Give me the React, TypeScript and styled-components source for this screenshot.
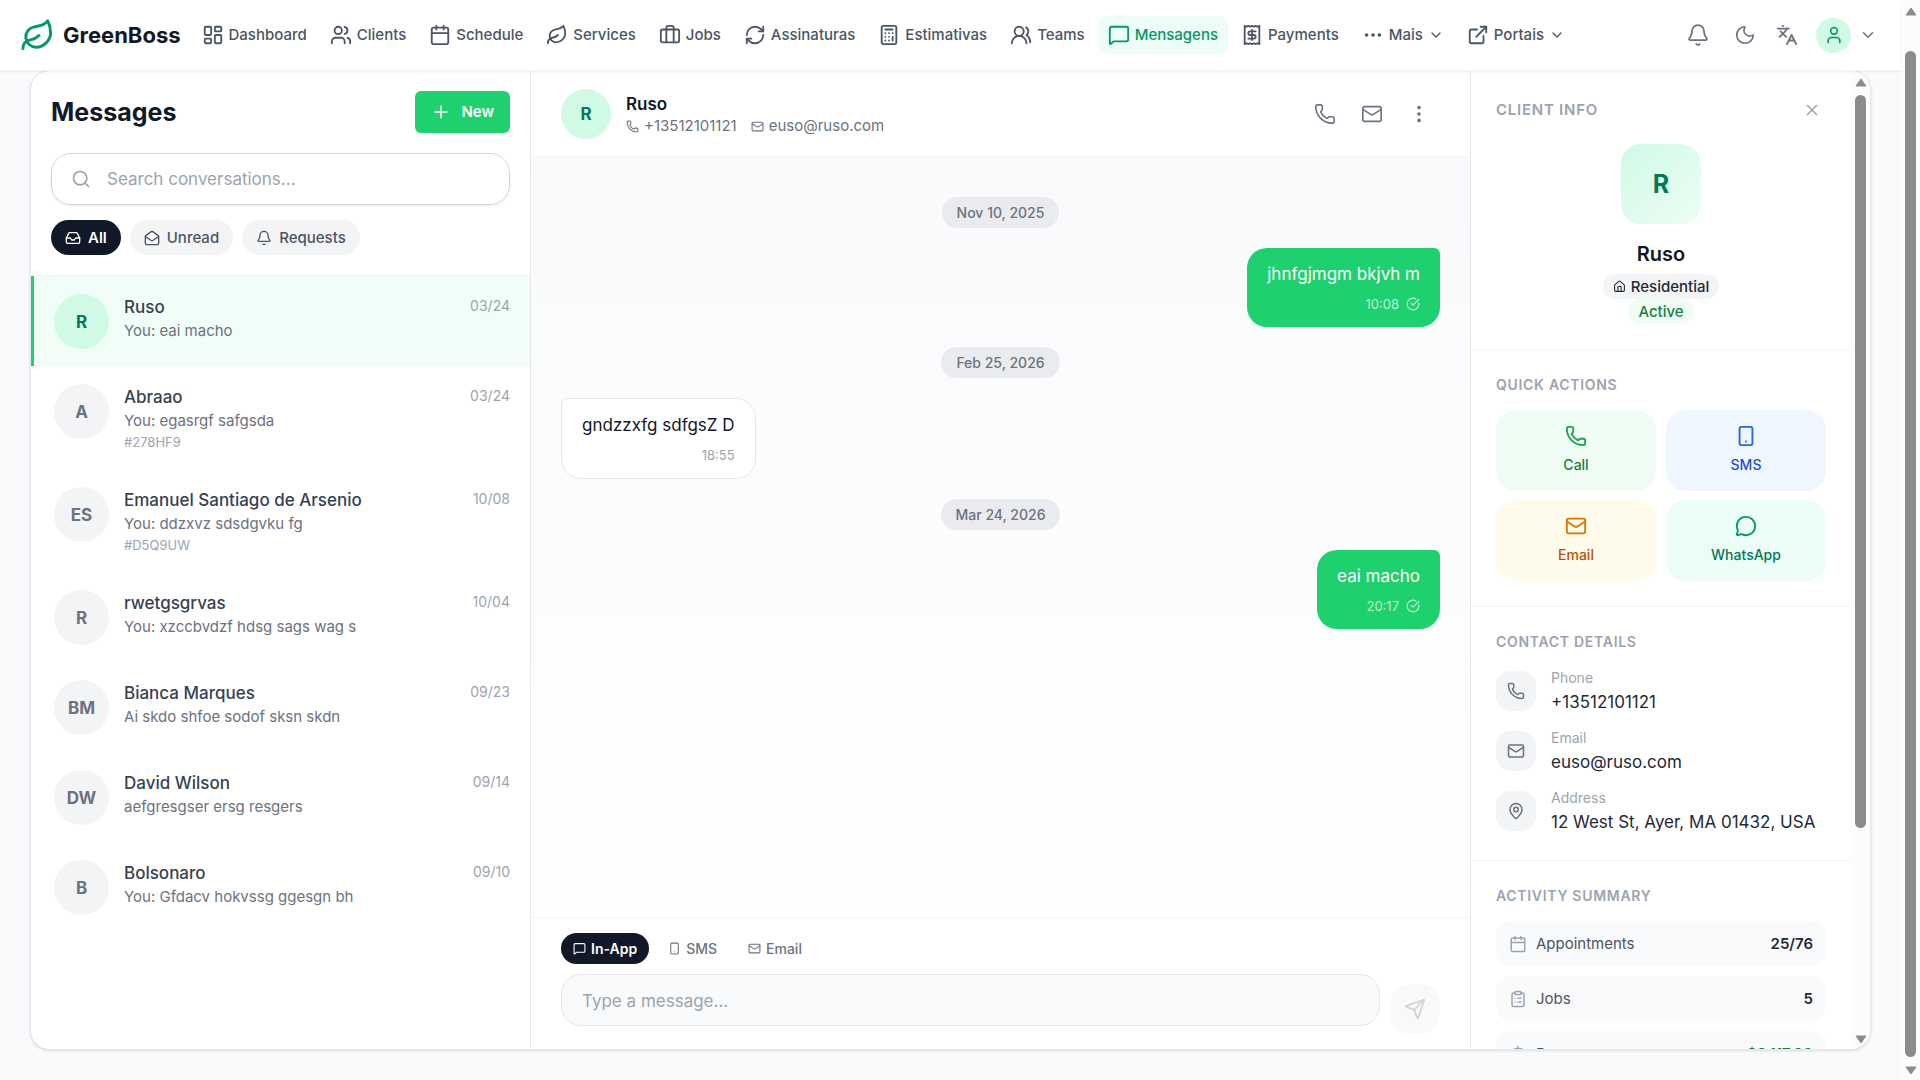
import React, { useState } from "react";
import styled, { createGlobalStyle, css } from "styled-components";
import {
  Bell, Briefcase, Calculator, Calendar, ChevronDown, CircleCheckBig, ClipboardList, DollarSign,
  Ellipsis, EllipsisVertical, ExternalLink, House, Inbox, Languages, LayoutDashboard, Leaf, Mail,
  MailOpen, MapPin, MessageCircle, MessageSquare, Moon, Phone, Plus, Receipt, RefreshCw, Search,
  Send, Smartphone, User, Users, UsersRound, X, type LucideIcon,
} from "lucide-react";

const c = {
  brand: "#1fd06f",
  emerald: "#059669",
  emeraldDark: "#047857",
  mint: "#d1fae5",
  ink: "#111827",
  text: "#1f2937",
  body: "#374151",
  mid: "#4b5563",
  soft: "#6b7280",
  faint: "#9ca3af",
  line: "#e5e7eb",
  hair: "#f3f4f6",
  page: "#f9fafb",
};

const GlobalStyle = createGlobalStyle`
  *, *::before, *::after { box-sizing: border-box; }
  body {
    margin: 0;
    overflow: hidden;
    background: ${c.page};
    color: ${c.ink};
    font-family: Inter, "Liberation Sans", sans-serif;
    font-size: 15px;
    line-height: 20px;
  }
  h1, h2, h3, p, ul, dl, dd { margin: 0; padding: 0; }
  ul { list-style: none; }
  button, input, textarea { font: inherit; color: inherit; border: 0; background: none; padding: 0; margin: 0; }
  button { cursor: pointer; }
  a { color: inherit; text-decoration: none; }
  svg { display: block; flex: none; }
`;

const Window = styled.div`
  display: flex;
  height: 100vh;
`;

const Page = styled.div`
  flex: 1;
  min-width: 0;
  display: flex;
  flex-direction: column;
`;

/* top bar */

const TopBar = styled.header`
  position: relative;
  z-index: 1;
  flex: none;
  display: flex;
  align-items: center;
  height: 71px;
  padding: 0 24px 0 20px;
  background: #fff;
  border-bottom: 1px solid ${c.hair};
  box-shadow: 0 1px 3px rgba(0, 0, 0, 0.06);
`;

const Brand = styled.a`
  display: flex;
  align-items: center;
  gap: 8px;
  margin-right: 11px;
  font-size: 22px;
  font-weight: 700;
  line-height: 30px;
  svg { color: ${c.emerald}; }
`;

const Nav = styled.nav`
  display: flex;
  flex: 1;
  gap: 3px;
`;

const navItem = css`
  display: flex;
  align-items: center;
  gap: 5px;
  height: 38px;
  padding: 0 10px;
  border-radius: 10px;
  color: ${c.mid};
  font-size: 15px;
  font-weight: 500;
  white-space: nowrap;
`;

const NavLink = styled.a<{ $active?: boolean }>`
  ${navItem}
  ${(p) => p.$active && css`background: #ecfdf5; color: ${c.emerald};`}
`;

const NavMenu = styled.button`
  ${navItem}
`;

const Tools = styled.div`
  display: flex;
  align-items: center;
  color: ${c.soft};
`;

const ToolButton = styled.button<{ $wide?: boolean }>`
  display: grid;
  place-items: center;
  width: ${(p) => (p.$wide ? 52 : 42)}px;
  height: 42px;
`;

const Account = styled.button`
  display: flex;
  align-items: center;
  gap: 8px;
  margin-left: 8px;
`;

const AccountPhoto = styled.span`
  display: grid;
  place-items: center;
  width: 35px;
  height: 35px;
  border-radius: 50%;
  background: ${c.mint};
  color: ${c.emerald};
`;

/* frame */

const Main = styled.main`
  display: flex;
  height: calc(100vh - 100px);
  margin: -1px 30px 0;
  border: 1px solid ${c.line};
  border-radius: 20px;
  background: #fff;
  box-shadow: 0 1px 3px rgba(0, 0, 0, 0.12);
  overflow: hidden;
`;

/* conversations */

const Sidebar = styled.section`
  flex: none;
  display: flex;
  flex-direction: column;
  width: 500px;
  border-right: 1px solid ${c.line};
`;

const SidebarHead = styled.div`
  padding: 20px;
  border-bottom: 1px solid ${c.hair};
`;

const TitleRow = styled.div`
  display: flex;
  align-items: center;
  justify-content: space-between;
  margin-bottom: 20px;
`;

const Title = styled.h1`
  font-size: 25px;
  font-weight: 700;
  line-height: 32px;
`;

const NewButton = styled.button`
  display: flex;
  align-items: center;
  gap: 10px;
  height: 42px;
  padding: 0 16px;
  border-radius: 6px;
  background: ${c.brand};
  color: #fff;
  font-weight: 600;
`;

const SearchBox = styled.label`
  display: flex;
  align-items: center;
  gap: 16px;
  height: 52px;
  padding: 0 19px;
  border: 1px solid #d1d5db;
  border-radius: 20px;
  box-shadow: 0 1px 2px rgba(0, 0, 0, 0.08);
  color: ${c.faint};
  input {
    flex: 1;
    min-width: 0;
    outline: 0;
    color: ${c.ink};
    font-size: 17px;
    line-height: 24px;
  }
  input::placeholder { color: ${c.faint}; opacity: 1; }
`;

const Filters = styled.div`
  display: flex;
  gap: 9px;
  margin-top: 15px;
`;

const Filter = styled.button<{ $on?: boolean }>`
  display: flex;
  align-items: center;
  gap: 7px;
  height: 35px;
  padding: 0 14px;
  border-radius: 18px;
  background: ${(p) => (p.$on ? c.ink : c.hair)};
  color: ${(p) => (p.$on ? "#fff" : c.mid)};
  font-weight: ${(p) => (p.$on ? 600 : 500)};
`;

const Thread = styled.button<{ $on?: boolean }>`
  display: flex;
  align-items: flex-start;
  gap: 15px;
  width: 100%;
  padding: 18px 20px 17px;
  border-left: 3px solid ${(p) => (p.$on ? c.brand : "transparent")};
  background: ${(p) => (p.$on ? "#f1fef8" : "transparent")};
  text-align: left;
`;

const Initials = styled.span<{ $size: number; $on?: boolean }>`
  flex: none;
  display: grid;
  place-items: center;
  width: ${(p) => p.$size}px;
  height: ${(p) => p.$size}px;
  border-radius: 50%;
  background: ${(p) => (p.$on ? c.mint : c.hair)};
  color: ${(p) => (p.$on ? c.emeraldDark : c.soft)};
  font-size: 17px;
  font-weight: 700;
`;

const ThreadBody = styled.span`
  flex: 1;
  min-width: 0;
  display: flex;
  flex-direction: column;
`;

const ThreadTop = styled.span`
  display: flex;
  justify-content: space-between;
  color: ${c.faint};
  font-size: 14px;
  line-height: 24px;
`;

const ThreadName = styled.span`
  color: ${c.body};
  font-size: 17px;
  font-weight: 500;
  line-height: 26px;
`;

const Preview = styled.span`
  color: ${c.soft};
  font-size: 15px;
  line-height: 22px;
`;

const Tag = styled.span`
  color: ${c.faint};
  font-size: 13px;
  line-height: 20px;
`;

/* chat */

const Chat = styled.section`
  flex: 1;
  min-width: 0;
  display: flex;
  flex-direction: column;
`;

const ChatHead = styled.div`
  display: flex;
  align-items: center;
  gap: 15px;
  padding: 18px 30px 17px;
  border-bottom: 1px solid ${c.hair};
`;

const Who = styled.div`
  flex: 1;
  padding-top: 2px;
`;

const WhoName = styled.h2`
  font-size: 17px;
  font-weight: 600;
  line-height: 22px;
`;

const WhoMeta = styled.div`
  display: flex;
  gap: 14px;
  color: ${c.soft};
  line-height: 22px;
`;

const MetaItem = styled.span`
  display: flex;
  align-items: center;
  gap: 5px;
`;

const HeadButtons = styled.div`
  display: flex;
  gap: 5px;
  color: ${c.soft};
`;

const Log = styled.div`
  flex: 1;
  min-height: 0;
  display: flex;
  flex-direction: column;
  gap: 20px;
  padding: 40px 30px;
  background: linear-gradient(to bottom, ${c.page}, #fff);
  overflow: hidden;
`;

const Day = styled.time`
  align-self: center;
  padding: 5px 15px;
  border-radius: 16px;
  background: #e9ebee;
  color: ${c.soft};
  font-size: 14px;
  font-weight: 500;
  line-height: 21px;
`;

const Bubble = styled.div<{ $mine?: boolean }>`
  align-self: ${(p) => (p.$mine ? "flex-end" : "flex-start")};
  display: flex;
  flex-direction: column;
  gap: 5px;
  padding: 12px 20px;
  border-radius: ${(p) => (p.$mine ? "20px 6px 20px 20px" : "6px 20px 20px 20px")};
  border: ${(p) => (p.$mine ? "0" : `1px solid ${c.line}`)};
  background: ${(p) => (p.$mine ? c.brand : "#fff")};
  color: ${(p) => (p.$mine ? "#fff" : c.ink)};
  font-size: 17px;
  line-height: 28px;
`;

const Stamp = styled.span<{ $mine?: boolean }>`
  display: flex;
  align-items: center;
  justify-content: flex-end;
  gap: 7px;
  color: ${(p) => (p.$mine ? "rgba(255, 255, 255, 0.7)" : c.faint)};
  font-size: 13px;
  line-height: 22px;
`;

const Composer = styled.form`
  padding: 15px 30px;
  border-top: 1px solid ${c.hair};
`;

const Channels = styled.div`
  display: flex;
  gap: 7px;
  margin-bottom: 10px;
`;

const Channel = styled.button<{ $on?: boolean }>`
  display: flex;
  align-items: center;
  gap: 5px;
  height: 31px;
  padding: 0 12px;
  border-radius: 16px;
  background: ${(p) => (p.$on ? c.ink : "transparent")};
  color: ${(p) => (p.$on ? "#fff" : c.soft)};
  font-size: 14px;
  font-weight: ${(p) => (p.$on ? 600 : 500)};
`;

const WriteRow = styled.div`
  display: flex;
  align-items: flex-end;
  gap: 10px;
`;

const Message = styled.textarea`
  flex: 1;
  height: 52px;
  margin-bottom: 8px;
  padding: 14px 20px 12px;
  border: 1px solid ${c.line};
  border-radius: 20px;
  background: ${c.page};
  color: ${c.ink};
  font-size: 17px;
  line-height: 24px;
  resize: none;
  outline: 0;
  &::placeholder { color: ${c.faint}; opacity: 1; }
`;

const SendButton = styled.button`
  display: grid;
  place-items: center;
  width: 50px;
  height: 50px;
  border-radius: 20px;
  background: #f9f9f9;
  color: #d1d5db;
`;

/* client panel */

const Info = styled.aside`
  flex: none;
  display: flex;
  width: 400px;
  border-left: 1px solid ${c.line};
`;

const InfoBody = styled.div`
  flex: 1;
  min-width: 0;
  overflow: hidden;
`;

const Section = styled.section`
  padding: 25px;
  border-bottom: 1px solid ${c.hair};
`;

const SectionTitle = styled.h3`
  margin-bottom: 15px;
  color: ${c.faint};
  font-size: 14px;
  font-weight: 600;
  line-height: 20px;
  letter-spacing: 0.05em;
  text-transform: uppercase;
`;

const InfoHead = styled.div`
  display: flex;
  justify-content: space-between;
  margin-bottom: 20px;
  ${SectionTitle} { margin: 0; font-size: 15px; line-height: 28px; }
`;

const CloseButton = styled.button`
  display: grid;
  place-items: center;
  width: 28px;
  height: 28px;
  color: ${c.faint};
`;

const Profile = styled.div`
  display: flex;
  flex-direction: column;
  align-items: center;
`;

const Portrait = styled.div`
  display: grid;
  place-items: center;
  width: 80px;
  height: 80px;
  border-radius: 20px;
  background: linear-gradient(135deg, ${c.mint}, #ecfdf5);
  color: ${c.emeraldDark};
  font-size: 25px;
  font-weight: 700;
`;

const ProfileName = styled.h2`
  margin: 15px 0 5px;
  font-size: 20px;
  font-weight: 600;
  line-height: 30px;
`;

const Badge = styled.span<{ $green?: boolean }>`
  display: flex;
  align-items: center;
  gap: 5px;
  height: 25px;
  padding: 0 10px;
  border-radius: 13px;
  background: ${(p) => (p.$green ? "#f0fdf4" : c.hair)};
  color: ${(p) => (p.$green ? "#15803d" : c.text)};
  font-weight: 500;
`;

const Tiles = styled.div`
  display: grid;
  grid-template-columns: 1fr 1fr;
  gap: 9px 10px;
`;

const Tile = styled.a<{ $bg: string; $icon: string; $label: string }>`
  display: flex;
  flex-direction: column;
  align-items: center;
  gap: 8px;
  padding: 15px 15px 16px;
  border-radius: 20px;
  background: ${(p) => p.$bg};
  color: ${(p) => p.$label};
  font-size: 14px;
  font-weight: 500;
  svg { color: ${(p) => p.$icon}; }
`;

const Details = styled.dl`
  display: flex;
  flex-direction: column;
  gap: 12px;
`;

const Detail = styled.div`
  display: grid;
  grid-template-columns: 40px 1fr;
  align-items: center;
  column-gap: 15px;
  white-space: nowrap;
  dt { color: ${c.faint}; font-size: 14px; line-height: 22px; }
  dd { grid-column: 2; color: ${c.text}; font-size: 17px; line-height: 26px; }
`;

const DetailIcon = styled.span`
  grid-row: 1 / 3;
  display: grid;
  place-items: center;
  width: 40px;
  height: 40px;
  border-radius: 15px;
  background: ${c.hair};
  color: ${c.soft};
`;

const Stats = styled.dl`
  display: flex;
  flex-direction: column;
  gap: 10px;
`;

const Stat = styled.div<{ $money?: boolean }>`
  display: flex;
  align-items: center;
  justify-content: space-between;
  height: 45px;
  padding: 0 13px;
  border-radius: 15px;
  background: ${c.page};
  dt { display: flex; align-items: center; gap: 9px; color: ${c.mid}; }
  dt svg { color: ${c.faint}; }
  dd { color: ${(p) => (p.$money ? "#15803d" : c.text)}; font-weight: 600; }
`;

/* scroll rails */

const Rail = styled.div`
  flex: none;
  display: flex;
  flex-direction: column;
  align-items: center;
  gap: 8px;
  width: 19px;
  padding: 7px 0 5px;
  background: #fcfcfc;
  color: #8b8b8b;
`;

const Track = styled.div<{ $before: number; $size: number; $after: number }>`
  flex: 1;
  display: grid;
  grid-template-rows: ${(p) => `${p.$before}fr ${p.$size}fr ${p.$after}fr`};
`;

const Thumb = styled.div`
  grid-row: 2;
  width: 11px;
  border-radius: 6px;
  background: #8b8b8b;
`;

function ScrollRail(props: { before: number; size: number; after: number }) {
  return (
    <Rail aria-hidden="true">
      <svg width="12" height="9" viewBox="0 0 12 9"><path d="M6 1 11 8H1Z" fill="currentColor" stroke="currentColor" strokeLinejoin="round" /></svg>
      <Track $before={props.before} $size={props.size} $after={props.after}><Thumb /></Track>
      <svg width="12" height="9" viewBox="0 0 12 9"><path d="M6 8 1 1h10Z" fill="currentColor" stroke="currentColor" strokeLinejoin="round" /></svg>
    </Rail>
  );
}

const links: [string, LucideIcon][] = [
  ["Dashboard", LayoutDashboard],
  ["Clients", Users],
  ["Schedule", Calendar],
  ["Services", Leaf],
  ["Jobs", Briefcase],
  ["Assinaturas", RefreshCw],
  ["Estimativas", Calculator],
  ["Teams", UsersRound],
  ["Mensagens", MessageSquare],
  ["Payments", Receipt],
];

const menus: [string, LucideIcon][] = [
  ["Mais", Ellipsis],
  ["Portais", ExternalLink],
];

const filters: [string, LucideIcon][] = [
  ["All", Inbox],
  ["Unread", MailOpen],
  ["Requests", Bell],
];

const threads = [
  { initials: "R", name: "Ruso", text: "You: eai macho", date: "03/24" },
  { initials: "A", name: "Abraao", text: "You: egasrgf safgsda", date: "03/24", tag: "#278HF9" },
  { initials: "ES", name: "Emanuel Santiago de Arsenio", text: "You: ddzxvz sdsdgvku fg", date: "10/08", tag: "#D5Q9UW" },
  { initials: "R", name: "rwetgsgrvas", text: "You: xzccbvdzf hdsg sags wag s", date: "10/04" },
  { initials: "BM", name: "Bianca Marques", text: "Ai skdo shfoe sodof sksn skdn", date: "09/23" },
  { initials: "DW", name: "David Wilson", text: "aefgresgser ersg resgers", date: "09/14" },
  { initials: "B", name: "Bolsonaro", text: "You: Gfdacv hokvssg ggesgn bh", date: "09/10" },
];

const log = [
  { day: "Nov 10, 2025", text: "jhnfgjmgm bkjvh m", time: "10:08", mine: true },
  { day: "Feb 25, 2026", text: "gndzzxfg sdfgsZ D", time: "18:55", mine: false },
  { day: "Mar 24, 2026", text: "eai macho", time: "20:17", mine: true },
];

const channels: [string, LucideIcon][] = [
  ["In-App", MessageSquare],
  ["SMS", Smartphone],
  ["Email", Mail],
];

const actions: [string, LucideIcon, string, string, string, string][] = [
  ["Call", Phone, "#f0fdf4", "#16a34a", "#15803d", "tel:+13512101121"],
  ["SMS", Smartphone, "#eff6ff", "#2563eb", "#1d4ed8", "sms:+13512101121"],
  ["Email", Mail, "#fffbeb", "#d97706", "#b45309", "mailto:euso@ruso.com"],
  ["WhatsApp", MessageCircle, "#ecfdf5", "#059669", "#047857", "#whatsapp"],
];

const details: [string, string, LucideIcon][] = [
  ["Phone", "+13512101121", Phone],
  ["Email", "euso@ruso.com", Mail],
  ["Address", "12 West St, Ayer, MA 01432, USA", MapPin],
];

const stats: [string, string, LucideIcon][] = [
  ["Appointments", "25/76", Calendar],
  ["Jobs", "5", ClipboardList],
  ["Revenue", "$8,117.00", DollarSign],
];

export default function App() {
  const [filter, setFilter] = useState("All");
  const [thread, setThread] = useState(0);
  const [channel, setChannel] = useState("In-App");

  return (
    <Window>
      <GlobalStyle />
      <Page>
        <TopBar>
          <Brand href="#home"><Leaf size={35} />GreenBoss</Brand>
          <Nav>
            {links.map(([label, Icon]) => (
              <NavLink key={label} href={`#${label.toLowerCase()}`} $active={label === "Mensagens"}>
                <Icon size={22} />{label}
              </NavLink>
            ))}
            {menus.map(([label, Icon]) => (
              <NavMenu key={label} type="button"><Icon size={22} />{label}<ChevronDown size={16} /></NavMenu>
            ))}
          </Nav>
          <Tools>
            <ToolButton type="button" $wide aria-label="Notifications"><Bell size={24} strokeWidth={1.75} /></ToolButton>
            <ToolButton type="button" aria-label="Dark mode"><Moon size={22} strokeWidth={1.75} /></ToolButton>
            <ToolButton type="button" aria-label="Language"><Languages size={22} /></ToolButton>
            <Account type="button" aria-label="Account">
              <AccountPhoto><User size={20} /></AccountPhoto>
              <ChevronDown size={18} />
            </Account>
          </Tools>
        </TopBar>

        <Main>
          <Sidebar>
            <SidebarHead>
              <TitleRow>
                <Title>Messages</Title>
                <NewButton type="button"><Plus size={20} />New</NewButton>
              </TitleRow>
              <SearchBox>
                <Search size={20} />
                <input type="text" aria-label="Search conversations" placeholder="Search conversations..." />
              </SearchBox>
              <Filters>
                {filters.map(([label, Icon]) => (
                  <Filter key={label} type="button" $on={filter === label} onClick={() => setFilter(label)}>
                    <Icon size={16} />{label}
                  </Filter>
                ))}
              </Filters>
            </SidebarHead>
            <ul>
              {threads.map((t, i) => (
                <li key={t.name}>
                  <Thread type="button" $on={thread === i} onClick={() => setThread(i)}>
                    <Initials $size={55} $on={thread === i}>{t.initials}</Initials>
                    <ThreadBody>
                      <ThreadTop><ThreadName>{t.name}</ThreadName>{t.date}</ThreadTop>
                      <Preview>{t.text}</Preview>
                      {t.tag && <Tag>{t.tag}</Tag>}
                    </ThreadBody>
                  </Thread>
                </li>
              ))}
            </ul>
          </Sidebar>

          <Chat>
            <ChatHead>
              <Initials $size={50} $on>R</Initials>
              <Who>
                <WhoName>Ruso</WhoName>
                <WhoMeta>
                  <MetaItem><Phone size={13} />+13512101121</MetaItem>
                  <MetaItem><Mail size={13} />euso@ruso.com</MetaItem>
                </WhoMeta>
              </Who>
              <HeadButtons>
                <ToolButton type="button" aria-label="Call"><Phone size={22} strokeWidth={1.75} /></ToolButton>
                <ToolButton type="button" aria-label="Email"><Mail size={22} strokeWidth={1.75} /></ToolButton>
                <ToolButton type="button" aria-label="More"><EllipsisVertical size={22} /></ToolButton>
              </HeadButtons>
            </ChatHead>
            <Log>
              {log.map((m) => (
                <React.Fragment key={m.day}>
                  <Day>{m.day}</Day>
                  <Bubble $mine={m.mine}>
                    {m.text}
                    <Stamp $mine={m.mine}>{m.time}{m.mine && <CircleCheckBig size={14} />}</Stamp>
                  </Bubble>
                </React.Fragment>
              ))}
            </Log>
            <Composer onSubmit={(e) => e.preventDefault()}>
              <Channels>
                {channels.map(([label, Icon]) => (
                  <Channel key={label} type="button" $on={channel === label} onClick={() => setChannel(label)}>
                    <Icon size={13} />{label}
                  </Channel>
                ))}
              </Channels>
              <WriteRow>
                <Message rows={1} aria-label="Message" placeholder="Type a message..." />
                <SendButton type="submit" aria-label="Send"><Send size={22} /></SendButton>
              </WriteRow>
            </Composer>
          </Chat>

          <Info>
            <InfoBody>
              <Section>
                <InfoHead>
                  <SectionTitle>Client Info</SectionTitle>
                  <CloseButton type="button" aria-label="Close"><X size={18} /></CloseButton>
                </InfoHead>
                <Profile>
                  <Portrait>R</Portrait>
                  <ProfileName>Ruso</ProfileName>
                  <Badge><House size={13} />Residential</Badge>
                  <Badge $green>Active</Badge>
                </Profile>
              </Section>
              <Section>
                <SectionTitle>Quick Actions</SectionTitle>
                <Tiles>
                  {actions.map(([label, Icon, bg, icon, color, href]) => (
                    <Tile key={label} href={href} $bg={bg} $icon={icon} $label={color}><Icon size={22} />{label}</Tile>
                  ))}
                </Tiles>
              </Section>
              <Section>
                <SectionTitle>Contact Details</SectionTitle>
                <Details>
                  {details.map(([label, value, Icon]) => (
                    <Detail key={label}>
                      <DetailIcon><Icon size={18} /></DetailIcon>
                      <dt>{label}</dt>
                      <dd>{value}</dd>
                    </Detail>
                  ))}
                </Details>
              </Section>
              <Section>
                <SectionTitle>Activity Summary</SectionTitle>
                <Stats>
                  {stats.map(([label, value, Icon]) => (
                    <Stat key={label} $money={label === "Revenue"}>
                      <dt><Icon size={18} />{label}</dt>
                      <dd>{value}</dd>
                    </Stat>
                  ))}
                </Stats>
              </Section>
            </InfoBody>
            <ScrollRail before={0} size={733} after={199} />
          </Info>
        </Main>
      </Page>
      <ScrollRail before={27} size={1006} after={1} />
    </Window>
  );
}
